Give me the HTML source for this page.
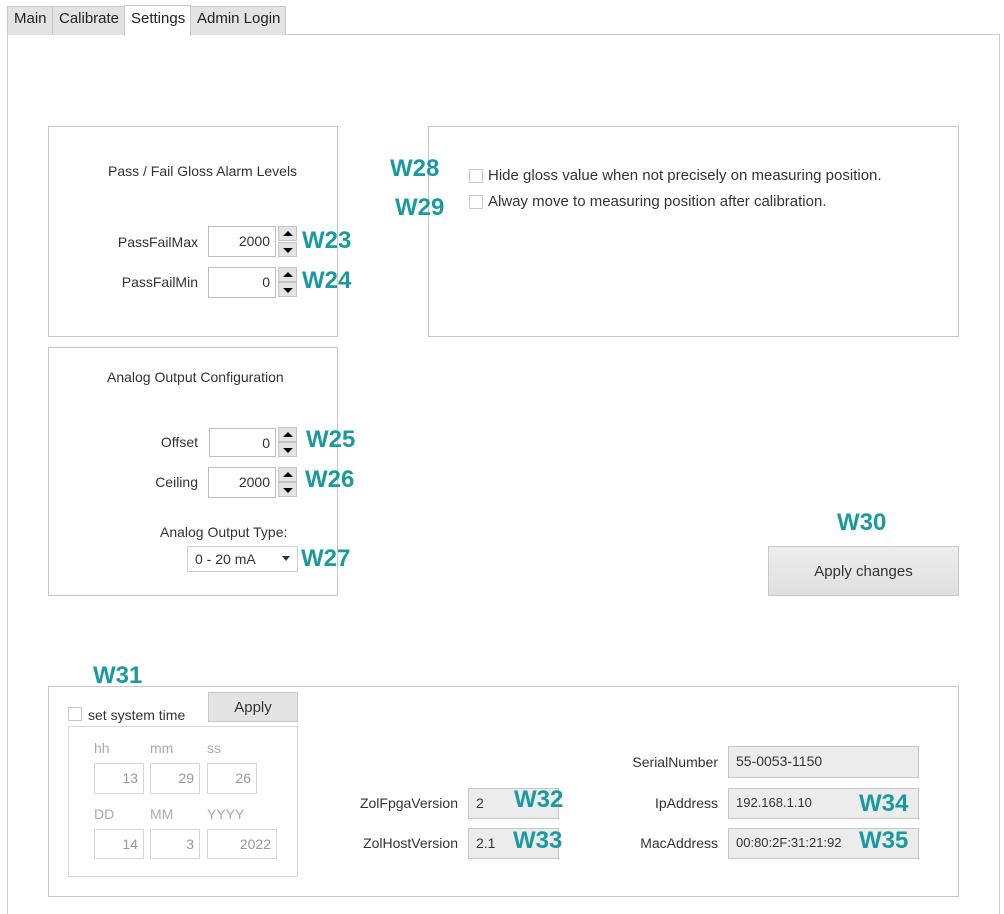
<!DOCTYPE html>
<html><head><meta charset="utf-8"><style>
*{box-sizing:border-box;margin:0;padding:0}
body{width:1004px;height:905px;background:#fff;font-family:"Liberation Sans",sans-serif;font-size:14px;color:#333;position:relative;overflow:hidden}
.a{position:absolute}
.tab{position:absolute;top:6px;height:29px;background:#e3e3e3;border:1px solid #c8c8c8;border-bottom:none;font-size:15px;color:#222;padding:3px 0 0 6px}
.panel{position:absolute;border:1px solid #c6c6c6;background:#fff}
.lbl{position:absolute;text-align:right;font-size:14px;color:#333}
.inp{position:absolute;border:1px solid #bdbdbd;background:#fff;text-align:right;padding:6px 5px 0 0;font-size:14px;color:#333}
.dis{border-color:#d6d6d6;color:#999}
.ro{position:absolute;border:1px solid #c6c6c6;background:#ececec;font-size:14px;color:#333;padding:6px 0 0 7px}
.sp{position:absolute;width:19px;height:15px;background:#e4e4e4;border:1px solid #c4c4c4}
.up:after{content:"";position:absolute;left:4px;top:4px;border-left:5px solid transparent;border-right:5px solid transparent;border-bottom:5px solid #000}
.dn:after{content:"";position:absolute;left:4px;top:5px;border-left:5px solid transparent;border-right:5px solid transparent;border-top:5px solid #000}
.w{position:absolute;font-weight:bold;font-size:24px;color:#1a9aa0}
.cb{position:absolute;width:14px;height:14px;border:1px solid #c8c8c8;background:#fff}
.gl{position:absolute;font-size:14px;color:#aaa}
</style></head><body>
<div class="a" style="left:7px;top:34px;width:993px;height:880px;border:1px solid #cfcfcf;border-bottom:none"></div>
<div class="tab" style="left:7px;width:46px">Main</div>
<div class="tab" style="left:52px;width:73px">Calibrate</div>
<div class="tab" style="left:124px;width:67px;top:5px;height:31px;background:#fff;padding-top:4px">Settings</div>
<div class="tab" style="left:190px;width:96px">Admin Login</div>

<div class="panel" style="left:48px;top:126px;width:290px;height:211px"></div>
<div class="a" style="left:108px;top:163px">Pass / Fail Gloss Alarm Levels</div>
<div class="lbl" style="left:80px;width:118px;top:234px">PassFailMax</div>
<div class="inp" style="left:208px;top:226px;width:68px;height:31px">2000</div>
<div class="sp up" style="left:278px;top:226px"></div><div class="sp dn" style="left:278px;top:242px"></div>
<div class="w" style="left:302px;top:227px">W23</div>
<div class="lbl" style="left:80px;width:118px;top:274px">PassFailMin</div>
<div class="inp" style="left:208px;top:267px;width:68px;height:31px">0</div>
<div class="sp up" style="left:278px;top:267px"></div><div class="sp dn" style="left:278px;top:282px"></div>
<div class="w" style="left:302px;top:267px">W24</div>

<div class="panel" style="left:428px;top:126px;width:531px;height:211px"></div>
<div class="w" style="left:390px;top:155px">W28</div>
<div class="w" style="left:395px;top:194px">W29</div>
<div class="cb" style="left:469px;top:169px"></div>
<div class="a" style="left:488px;top:167px;font-size:15px">Hide gloss value when not precisely on measuring position.</div>
<div class="cb" style="left:469px;top:195px"></div>
<div class="a" style="left:488px;top:193px;font-size:15px">Alway move to measuring position after calibration.</div>

<div class="panel" style="left:48px;top:347px;width:290px;height:249px"></div>
<div class="a" style="left:107px;top:369px">Analog Output Configuration</div>
<div class="lbl" style="left:80px;width:118px;top:434px">Offset</div>
<div class="inp" style="left:209px;top:428px;width:67px;height:29px">0</div>
<div class="sp up" style="left:278px;top:427px"></div><div class="sp dn" style="left:278px;top:442px"></div>
<div class="w" style="left:306px;top:426px">W25</div>
<div class="lbl" style="left:80px;width:118px;top:474px">Ceiling</div>
<div class="inp" style="left:208px;top:467px;width:68px;height:31px">2000</div>
<div class="sp up" style="left:278px;top:467px"></div><div class="sp dn" style="left:278px;top:482px"></div>
<div class="w" style="left:305px;top:466px">W26</div>
<div class="a" style="left:160px;top:524px">Analog Output Type:</div>
<div class="a" style="left:187px;top:546px;width:111px;height:26px;border:1px solid #d0d0d0;padding:4px 0 0 7px">0 - 20 mA</div>
<div class="a" style="left:282px;top:556px;border-left:4px solid transparent;border-right:4px solid transparent;border-top:5px solid #333"></div>
<div class="w" style="left:301px;top:545px">W27</div>

<div class="w" style="left:837px;top:509px">W30</div>
<div class="a" style="left:768px;top:546px;width:191px;height:50px;background:linear-gradient(#ededed,#e0e0e0);border:1px solid #c8c8c8;text-align:center;padding-top:16px;font-size:15px">Apply changes</div>

<div class="w" style="left:93px;top:662px">W31</div>
<div class="panel" style="left:48px;top:686px;width:911px;height:211px"></div>
<div class="cb" style="left:68px;top:707px"></div>
<div class="a" style="left:88px;top:707px">set system time</div>
<div class="a" style="left:208px;top:692px;width:90px;height:30px;background:#e4e4e4;border:1px solid #c8c8c8;text-align:center;padding-top:6px;font-size:15px">Apply</div>
<div class="a" style="left:68px;top:726px;width:230px;height:151px;border:1px solid #d8d8d8"></div>
<div class="gl" style="left:94px;top:740px">hh</div>
<div class="gl" style="left:150px;top:740px">mm</div>
<div class="gl" style="left:207px;top:740px">ss</div>
<div class="inp dis" style="left:94px;top:763px;width:50px;height:31px">13</div>
<div class="inp dis" style="left:150px;top:763px;width:50px;height:31px">29</div>
<div class="inp dis" style="left:207px;top:763px;width:50px;height:31px">26</div>
<div class="gl" style="left:94px;top:806px">DD</div>
<div class="gl" style="left:150px;top:806px">MM</div>
<div class="gl" style="left:207px;top:806px">YYYY</div>
<div class="inp dis" style="left:94px;top:829px;width:50px;height:30px">14</div>
<div class="inp dis" style="left:150px;top:829px;width:50px;height:30px">3</div>
<div class="inp dis" style="left:207px;top:829px;width:70px;height:30px">2022</div>

<div class="lbl" style="left:300px;width:158px;top:795px">ZolFpgaVersion</div>
<div class="ro" style="left:468px;top:788px;width:91px;height:31px">2</div>
<div class="w" style="left:514px;top:786px">W32</div>
<div class="lbl" style="left:300px;width:158px;top:835px">ZolHostVersion</div>
<div class="ro" style="left:468px;top:828px;width:91px;height:31px">2.1</div>
<div class="w" style="left:513px;top:827px">W33</div>
<div class="lbl" style="left:560px;width:158px;top:754px">SerialNumber</div>
<div class="ro" style="left:728px;top:746px;width:191px;height:32px">55-0053-1150</div>
<div class="lbl" style="left:560px;width:158px;top:795px">IpAddress</div>
<div class="ro" style="left:728px;top:788px;width:191px;height:31px;font-size:13px">192.168.1.10</div>
<div class="w" style="left:859px;top:790px">W34</div>
<div class="lbl" style="left:560px;width:158px;top:835px">MacAddress</div>
<div class="ro" style="left:728px;top:828px;width:191px;height:31px;font-size:13px">00:80:2F:31:21:92</div>
<div class="w" style="left:859px;top:827px">W35</div>
</body></html>
